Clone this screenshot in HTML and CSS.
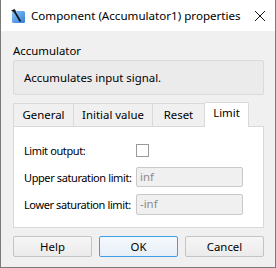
FILE: index.html
```html
<!DOCTYPE html>
<html lang="en">
<head>
    <meta charset="UTF-8">
    <title>Component (Accumulator1) properties</title>
    <link rel="stylesheet" href="styles.css">
</head>
<body>
    <div class="window">
        <div class="titlebar">
            <svg class="app-icon" width="16" height="16" viewBox="0 0 16 16">
                <defs>
                    <linearGradient id="ig" x1="0" y1="0" x2="1" y2="1">
                        <stop offset="0" stop-color="#8cc4f4"/>
                        <stop offset="1" stop-color="#2f7fd6"/>
                    </linearGradient>
                </defs>
                <rect x="2" y="3" width="13" height="12" rx="1.5" fill="url(#ig)"/>
                <path d="M1 2.5 L4.5 1 L6 3 L4 4.5 Z" fill="#222"/>
                <path d="M4.5 3.5 L10.5 13.5" stroke="#111" stroke-width="1.6"/>
            </svg>
            <span class="title">Component (Accumulator1) properties</span>
            <svg class="close" width="12" height="12" viewBox="0 0 12 12">
                <path d="M1 1 L11 11 M11 1 L1 11" stroke="#111" stroke-width="1"/>
            </svg>
        </div>
        <div class="content">
            <div class="comp-name">Accumulator</div>
            <div class="description">Accumulates input signal.</div>
            <div class="tabs">
                <div class="tab">General</div>
                <div class="tab">Initial value</div>
                <div class="tab">Reset</div>
                <div class="tab active">Limit</div>
            </div>
            <div class="pane">
                <div class="form-row first">
                    <label>Limit output:</label>
                    <div class="checkbox"></div>
                </div>
                <div class="form-row second">
                    <label>Upper saturation limit:</label>
                    <div class="field">inf</div>
                </div>
                <div class="form-row third">
                    <label>Lower saturation limit:</label>
                    <div class="field">-inf</div>
                </div>
            </div>
            <div class="buttons">
                <button class="btn">Help</button>
                <button class="btn default">OK</button>
                <button class="btn">Cancel</button>
            </div>
        </div>
    </div>
</body>
</html>
```

FILE: styles.css
```css
* { box-sizing: border-box; }
body {
    margin: 0;
    font-family: 'Segoe UI', 'Noto Sans', Arial, sans-serif;
    font-size: 11.4px;
    color: #000;
    background: #fff;
}
.window {
    width: 276px;
    height: 268px;
    background: #f0f0f0;
    border: 1px solid #7a7a7a;
    border-top: none;
    display: flex;
    flex-direction: column;
}
.titlebar {
    height: 31px;
    background: #fff;
    display: flex;
    align-items: center;
    padding: 0 0 0 9px;
}
.app-icon {
    margin-right: 5px;
}
.title {
    flex: 1;
    font-size: 11.6px;
    color: #000;
}
.close {
    margin-right: 9px;
}
.content {
    padding: 0 11px 0 12px;
    flex: 1;
    display: flex;
    flex-direction: column;
}
.comp-name {
    margin-top: 10px;
    height: 19px;
    line-height: 19px;
}
.description {
    height: 35px;
    background: #ebebeb;
    border: 1px solid #dadada;
    border-radius: 2px;
    padding-left: 10px;
    line-height: 33px;
}
.tabs {
    display: flex;
    margin-top: 7px;
    height: 24px;
    align-items: flex-end;
}
.tab {
    height: 23px;
    line-height: 21px;
    border: 1px solid #d9d9d9;
    border-bottom: none;
    background: #f0f0f0;
    text-align: center;
    margin-right: -1px;
}
.tab:nth-child(1) { width: 61px; }
.tab:nth-child(2) { width: 80px; }
.tab:nth-child(3) { width: 53px; }
.tab.active {
    width: 45px;
    height: 25px;
    background: #fff;
    border-radius: 2px 2px 0 0;
    position: relative;
    top: 1px;
    line-height: 20px;
}
.pane {
    height: 102px;
    background: #fff;
    border: 1px solid #d9d9d9;
    padding: 15px 0 0 10px;
}
.form-row {
    display: flex;
    align-items: center;
}
.form-row label {
    width: 112px;
    white-space: nowrap;
    font-size: 11px;
    letter-spacing: -0.4px;
}
.form-row.first { height: 16px; }
.form-row.second { margin-top: 9px; height: 20px; }
.form-row.third { margin-top: 7px; height: 21px; }
.checkbox {
    width: 13px;
    height: 13px;
    border: 1px solid #9a9a9a;
    background: #fff;
}
.field {
    width: 107px;
    height: 100%;
    border: 1px solid #c9c9c9;
    border-radius: 2px;
    background: #f0f0f0;
    color: #8c8c8c;
    padding-left: 3px;
    line-height: 18px;
}
.buttons {
    display: flex;
    justify-content: space-between;
    margin-top: 8px;
}
.btn {
    width: 79px;
    height: 21px;
    font-family: inherit;
    font-size: 11.4px;
    border: 1px solid #c4c4c4;
    border-radius: 2px;
    background: linear-gradient(#f6f6f6, #ebebeb);
    color: #000;
    padding: 0;
}
.btn.default {
    border-color: #3d9ee8;
    background: linear-gradient(#f3f8fc, #e7eff7);
}
```
